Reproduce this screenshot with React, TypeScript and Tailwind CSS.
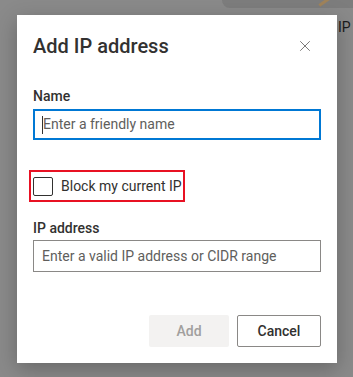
import { X } from "lucide-react"

export default function App() {
  return (
    <div
      className="relative w-[353px] h-[377px] overflow-hidden bg-[#8a8a8a]"
      style={{ fontFamily: 'Roboto, "Liberation Sans", sans-serif' }}
    >
      {/* page content dimmed behind the dialog */}
      <div className="absolute left-[222px] top-[-20px] w-[150px] h-[28px] rounded-[8px] bg-[#7d7d7d]" />
      <div className="absolute left-[318px] top-[0px] w-[14px] h-[3px] rotate-[-35deg] bg-[#a0835a]" />
      <div className="absolute left-[338px] top-[17px] text-[14px] text-[#1b1b1b]">IP</div>

      <div className="relative ml-[17px] mt-[15px] w-[320px] h-[348px] bg-white shadow-[0_6px_20px_rgba(0,0,0,0.25)] flex flex-col px-4">
        <div className="flex items-center justify-between pt-[17px]">
          <h1 className="text-[20px] leading-[28px] font-medium text-[#323130]">Add IP address</h1>
          <X size={18} strokeWidth={1.1} className="mr-[7px] text-[#605e5c]" />
        </div>

        <label className="mt-[26px] text-[14px] leading-[20px] font-medium text-[#323130]">Name</label>
        <div className="mt-[3px] h-[31px] border-2 border-[#0078d4] flex items-center pl-[7px] text-[14px] text-[#605e5c]">
          <span className="w-px h-[18px] bg-[#323130]" />
          Enter a friendly name
        </div>

        <div className="mt-[30px] ml-[-4px] w-[156px] h-[32px] border-2 border-[#e81123] flex items-center gap-2 pl-[2px] whitespace-nowrap">
          <span className="shrink-0 w-[20px] h-[19px] rounded-[2px] border border-[#323130]" />
          <span className="text-[14px] text-[#323130]">Block my current IP</span>
        </div>

        <label className="mt-[16px] text-[14px] leading-[20px] font-medium text-[#323130]">IP address</label>
        <div className="mt-[2px] h-[32px] border border-[#8a8886] flex items-center pl-[8px] text-[14px] text-[#605e5c] whitespace-nowrap">
          Enter a valid IP address or CIDR range
        </div>

        <div className="mt-[43px] flex justify-end gap-2">
          <button className="w-[80px] h-[32px] rounded-[2px] bg-[#f3f2f1] text-[14px] font-medium text-[#a19f9d]">Add</button>
          <button className="w-[84px] h-[32px] rounded-[2px] border border-[#8a8886] bg-white text-[14px] font-medium text-[#323130]">Cancel</button>
        </div>
      </div>
    </div>
  )
}
